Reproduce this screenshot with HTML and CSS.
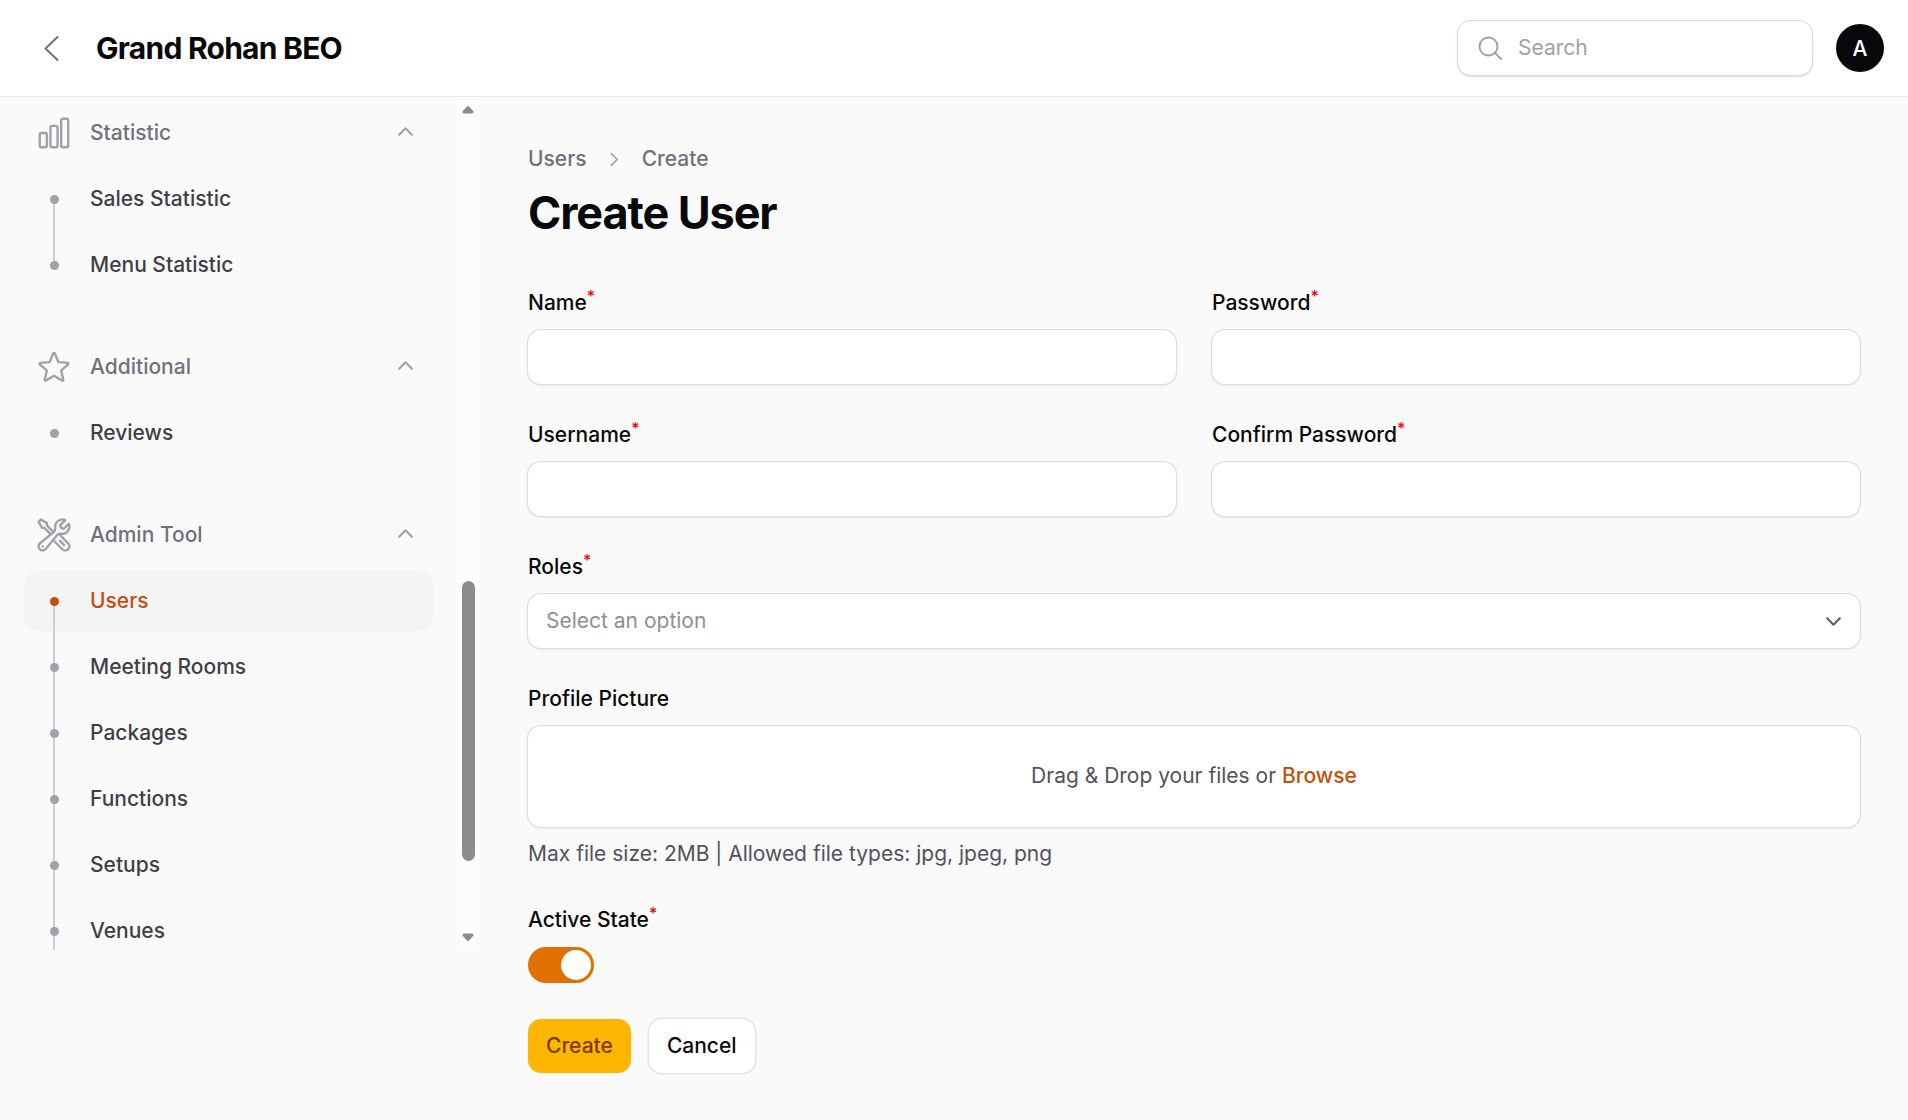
FILE: index.html
```html
<!DOCTYPE html>
<html lang="en">
<head>
    <meta charset="UTF-8">
    <title>Create User</title>
    <link rel="stylesheet" href="styles.css">
</head>
<body>
    <header class="topbar">
        <svg class="back-icon" viewBox="0 0 15 25"><path d="M13.500 1 1.500 12.500 13.500 24"/></svg>
        <div class="brand">Grand Rohan BEO</div>
        <div class="search">
            <svg class="search-icon" viewBox="0 0 24 24"><circle cx="10.500" cy="10.500" r="9"/><path d="M17 17l6 6"/></svg>
            <input class="search-input" type="text" placeholder="Search">
        </div>
        <div class="avatar">A</div>
    </header>

    <div class="layout">
        <aside class="sidebar">
            <nav class="nav">
                <div class="nav-group">
                    <div class="group-head">
                        <svg class="group-icon" viewBox="0 0 24 24"><path d="M3 13.125C3 12.504 3.504 12 4.125 12h2.250c.621 0 1.125.504 1.125 1.125v6.750C7.500 20.496 6.996 21 6.375 21h-2.250A1.125 1.125 0 0 1 3 19.875v-6.750ZM9.750 8.625c0-.621.504-1.125 1.125-1.125h2.250c.621 0 1.125.504 1.125 1.125v11.250c0 .621-.504 1.125-1.125 1.125h-2.250a1.125 1.125 0 0 1-1.125-1.125V8.625ZM16.500 4.125c0-.621.504-1.125 1.125-1.125h2.250C20.496 3 21 3.504 21 4.125v15.750c0 .621-.504 1.125-1.125 1.125h-2.250a1.125 1.125 0 0 1-1.125-1.125V4.125Z"/></svg>
                        <span class="group-label">Statistic</span>
                        <svg class="group-chevron" viewBox="0 0 16 10"><path d="M1 8.500 8 1.500l7 7"/></svg>
                    </div>
                    <a class="nav-item">Sales Statistic</a>
                    <a class="nav-item">Menu Statistic</a>
                </div>
                <div class="nav-group">
                    <div class="group-head">
                        <svg class="group-icon" viewBox="0 0 24 24"><path d="M11.480 3.499a.562.562 0 0 1 1.040 0l2.125 5.111a.563.563 0 0 0 .475.345l5.518.442c.499.040.701.663.321.988l-4.204 3.602a.563.563 0 0 0-.182.557l1.285 5.385a.562.562 0 0 1-.840.610l-4.725-2.885a.562.562 0 0 0-.586 0L6.982 20.540a.562.562 0 0 1-.840-.610l1.285-5.386a.562.562 0 0 0-.182-.557l-4.204-3.602a.562.562 0 0 1 .321-.988l5.518-.442a.563.563 0 0 0 .475-.345L11.480 3.500Z"/></svg>
                        <span class="group-label">Additional</span>
                        <svg class="group-chevron" viewBox="0 0 16 10"><path d="M1 8.500 8 1.500l7 7"/></svg>
                    </div>
                    <a class="nav-item">Reviews</a>
                </div>
                <div class="nav-group">
                    <div class="group-head">
                        <svg class="group-icon" viewBox="0 0 24 24"><path d="M11.420 15.170 17.250 21A2.652 2.652 0 0 0 21 17.250l-5.877-5.877M11.420 15.170l2.496-3.030c.317-.384.740-.626 1.208-.766M11.420 15.170l-4.655 5.653a2.548 2.548 0 1 1-3.586-3.586l6.837-5.630m5.108-.233c.550-.164 1.163-.188 1.743-.140a4.500 4.500 0 0 0 4.486-6.336l-3.276 3.277a3.004 3.004 0 0 1-2.250-2.250l3.276-3.276a4.500 4.500 0 0 0-6.336 4.486c.091 1.076-.071 2.264-.904 2.950l-.102.085m-1.745 1.437L5.909 7.500H4.500L2.250 3.750l1.500-1.500L7.500 4.500v1.409l4.260 4.260m-1.745 1.437 1.745-1.437m6.615 8.206L15.750 15.750M4.867 19.125h.008v.008h-.008v-.008Z"/></svg>
                        <span class="group-label">Admin Tool</span>
                        <svg class="group-chevron" viewBox="0 0 16 10"><path d="M1 8.500 8 1.500l7 7"/></svg>
                    </div>
                    <a class="nav-item active">Users</a>
                    <a class="nav-item">Meeting Rooms</a>
                    <a class="nav-item">Packages</a>
                    <a class="nav-item">Functions</a>
                    <a class="nav-item">Setups</a>
                    <a class="nav-item continues">Venues</a>
                </div>
            </nav>
            <div class="scrollbar">
                <svg class="arrow-up" viewBox="0 0 12 9"><path d="M6 2.500 10 7H2Z"/></svg>
                <span class="thumb"></span>
                <svg class="arrow-down" viewBox="0 0 12 9"><path d="M6 6.500 10 2H2Z"/></svg>
            </div>
        </aside>

        <main class="content">
            <div class="breadcrumb">
                <span>Users</span>
                <svg class="crumb-icon" viewBox="0 0 10 16"><path d="M1.500 1.500 8 8l-6.500 6.500"/></svg>
                <span>Create</span>
            </div>
            <h1 class="page-title">Create User</h1>

            <form class="form-grid">
                <div class="field">
                    <label class="field-label">Name<sup class="req">*</sup></label>
                    <input class="text-input" type="text">
                </div>
                <div class="field">
                    <label class="field-label">Password<sup class="req">*</sup></label>
                    <input class="text-input" type="password">
                </div>
                <div class="field">
                    <label class="field-label">Username<sup class="req">*</sup></label>
                    <input class="text-input" type="text">
                </div>
                <div class="field">
                    <label class="field-label">Confirm Password<sup class="req">*</sup></label>
                    <input class="text-input" type="password">
                </div>
                <div class="field wide">
                    <label class="field-label">Roles<sup class="req">*</sup></label>
                    <div class="select-box">
                        <span class="select-text">Select an option</span>
                        <svg class="select-icon" viewBox="0 0 16 10"><path d="M1 1.500l7 7 7-7"/></svg>
                    </div>
                </div>
                <div class="field wide">
                    <label class="field-label">Profile Picture</label>
                    <div class="dropzone">Drag &amp; Drop your files or&nbsp;<span class="browse">Browse</span></div>
                    <div class="hint">Max file size: 2MB | Allowed file types: jpg, jpeg, png</div>
                </div>
                <div class="field wide">
                    <label class="field-label">Active State<sup class="req">*</sup></label>
                    <div class="toggle"><span class="toggle-knob"></span></div>
                </div>
                <div class="actions wide">
                    <button class="btn btn-primary" type="button">Create</button>
                    <button class="btn btn-plain" type="button">Cancel</button>
                </div>
            </form>
        </main>
    </div>
</body>
</html>
```

FILE: styles.css
```css
* {
    box-sizing: border-box;
}
html, body {
    height: 100%;
}
body {
    margin: 0;
    background-color: #fafafa;
    color: #09090b;
    font-family: Inter, "Noto Sans", sans-serif;
    font-size: 21px;
    overflow: hidden;
}
svg {
    display: block;
    fill: none;
    stroke-linecap: round;
    stroke-linejoin: round;
}

/* top bar */
.topbar {
    display: flex;
    align-items: center;
    height: 97px;
    padding: 0 24px 0 44px;
    background-color: #fff;
    border-bottom: 1px solid #e9e9eb;
}
.back-icon {
    width: 15px;
    height: 25px;
    margin-right: 37px;
    stroke: #71717a;
    stroke-width: 2;
}
.brand {
    flex: 1;
    font-size: 30px;
    font-weight: 700;
    letter-spacing: -0.75px;
}
.search {
    display: flex;
    align-items: center;
    gap: 14px;
    width: 356px;
    height: 56px;
    padding: 0 20px;
    background-color: #fff;
    border: 1px solid #dcdce0;
    border-radius: 14px;
    box-shadow: 0 1px 2px rgba(0, 0, 0, 0.15);
}
.search-icon {
    flex: none;
    width: 24px;
    height: 24px;
    stroke: #a1a1aa;
    stroke-width: 2;
}
.search-input {
    flex: 1;
    min-width: 0;
    padding: 0 0 2px 2px;
    border: none;
    outline: none;
    background: none;
    font: inherit;
    color: #09090b;
}
.search-input::placeholder {
    color: #a1a1aa;
    opacity: 1;
}
.avatar {
    display: flex;
    align-items: center;
    justify-content: center;
    width: 48px;
    height: 48px;
    margin-left: 23px;
    border-radius: 50%;
    background-color: #09090b;
    color: #fff;
    font-weight: 500;
}

/* sidebar */
.layout {
    display: flex;
    height: calc(100% - 97px);
}
.sidebar {
    display: flex;
    flex: none;
    width: 480px;
    height: 853px;
}
.nav {
    flex: none;
    width: 456px;
    height: 100%;
    padding: 6px 23px 0 24px;
    overflow: hidden;
}
.nav-group {
    display: flex;
    flex-direction: column;
    gap: 6px;
    margin-bottom: 42px;
}
.group-head {
    display: flex;
    align-items: center;
    height: 60px;
    padding-left: 11px;
}
.group-icon {
    flex: none;
    width: 38px;
    height: 38px;
    margin-right: 17px;
    stroke: #a1a1aa;
    stroke-width: 1.5;
}
.group-label {
    flex: 1;
    margin-bottom: 2px;
    color: #71717a;
    font-weight: 500;
}
.group-chevron {
    flex: none;
    width: 15px;
    height: 9px;
    margin: 0 20px 3px 0;
    stroke: #a1a1aa;
    stroke-width: 2.400;
}
.nav-item {
    position: relative;
    display: flex;
    align-items: center;
    height: 60px;
    padding: 0 0 2px 66px;
    border-radius: 14px;
    color: #3f3f46;
    font-weight: 500;
}
.nav-item::before {
    content: "";
    position: absolute;
    left: 26px;
    top: 26px;
    width: 9px;
    height: 9px;
    border-radius: 50%;
    background-color: #a1a1aa;
    z-index: 1;
}
.nav-item::after {
    content: "";
    position: absolute;
    left: 29px;
    top: 30px;
    width: 2px;
    height: 66px;
    background-color: #cfcfd6;
}
.nav-item:last-child::after {
    display: none;
}
.nav-item.continues::after {
    display: block;
}
.nav-item.active {
    background-color: #f4f4f5;
    color: #c2500c;
}
.nav-item.active::before {
    background-color: #c2500c;
}

/* fake scrollbar, same look as the browser one */
.scrollbar {
    display: flex;
    flex: none;
    flex-direction: column;
    align-items: center;
    width: 24px;
    height: 100%;
    background-color: #fcfcfc;
}
.arrow-up, .arrow-down {
    flex: none;
    width: 12px;
    height: 9px;
    fill: #8c8c8c;
    stroke: #8c8c8c;
    stroke-width: 3;
}
.arrow-up {
    margin-top: 8px;
}
.arrow-down {
    margin-top: 72px;
}
.thumb {
    flex: none;
    width: 13px;
    height: 280px;
    margin-top: 467px;
    border-radius: 7px;
    background-color: #8c8c8c;
}

/* main form */
.content {
    flex: 1;
    min-width: 0;
    padding: 48px 48px 0;
}
.breadcrumb {
    display: flex;
    align-items: center;
    gap: 23px;
    color: #71717a;
    font-weight: 500;
    line-height: 28px;
}
.crumb-icon {
    width: 9px;
    height: 15px;
    stroke: #a1a1aa;
    stroke-width: 1.800;
}
.page-title {
    margin: 12px 0 46px;
    font-size: 45px;
    font-weight: 700;
    line-height: 56px;
    letter-spacing: -1.1px;
}
.form-grid {
    display: grid;
    grid-template-columns: 1fr 1fr;
    column-gap: 36px;
    row-gap: 34px;
}
.wide {
    grid-column: 1 / -1;
}
.field {
    display: flex;
    flex-direction: column;
    align-items: stretch;
}
.field-label {
    margin: 1px 0 11px;
    font-weight: 500;
    line-height: 30px;
}
.req {
    color: #ef0000;
    font-size: 16px;
    line-height: 0;
}
.text-input, .select-box, .dropzone {
    margin: 1px 0;
    background-color: #fff;
    border: none;
    border-radius: 13px;
    box-shadow: 0 0 0 1px #dcdce0, 0 1px 3px rgba(0, 0, 0, 0.15);
}
.text-input {
    height: 54px;
    padding: 0 18px;
    font: inherit;
    outline: none;
}
.select-box {
    display: flex;
    align-items: center;
    justify-content: space-between;
    height: 54px;
    padding: 0 19px 0 18px;
    color: #8e8e96;
}
.select-text {
    padding-bottom: 2px;
}
.select-icon {
    width: 15px;
    height: 9px;
    stroke: #5f5f6e;
    stroke-width: 2.400;
}
.dropzone {
    display: flex;
    align-items: center;
    justify-content: center;
    height: 101px;
    padding-bottom: 2px;
    color: #52525b;
}
.browse {
    color: #c2500c;
    font-weight: 500;
}
.hint {
    margin: 11px 0 1px;
    color: #52525b;
    line-height: 30px;
}
.toggle {
    display: flex;
    align-items: center;
    justify-content: flex-end;
    width: 66px;
    height: 36px;
    margin-top: 1px;
    padding: 0 3px;
    border-radius: 18px;
    background-color: #e07000;
}
.toggle-knob {
    width: 30px;
    height: 30px;
    border-radius: 50%;
    background-color: #fff;
}
.actions {
    display: flex;
    align-items: center;
    gap: 18px;
    margin-top: 2px;
}
.btn {
    height: 54px;
    padding: 0 18px 1px;
    border: none;
    border-radius: 13px;
    font: inherit;
    font-weight: 500;
}
.btn-primary {
    background-color: #fdb600;
    color: #7c3a00;
}
.btn-plain {
    background-color: #fff;
    box-shadow: 0 0 0 1.500px #e4e4e7;
    color: #09090b;
}
```
